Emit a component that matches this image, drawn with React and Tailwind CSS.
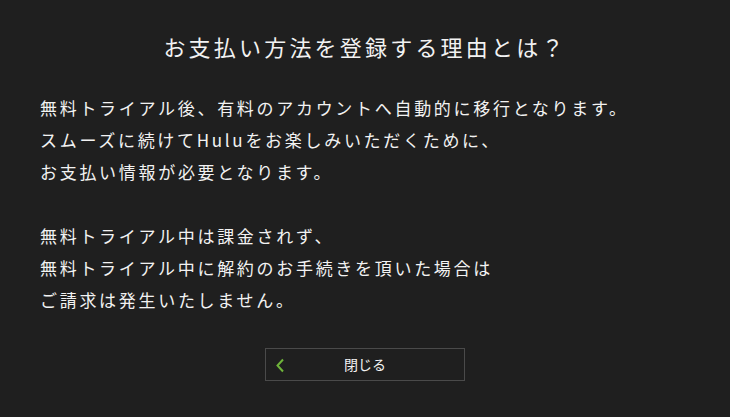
export default function App() {
  return (
    <div
      className="w-[730px] h-[417px] bg-[#1f1f1f] text-[#f2f2f2] overflow-hidden"
      style={{ fontFamily: '"Noto Sans CJK JP", "Noto Sans", sans-serif' }}
    >
      {/* Title */}
      <h1 className="pt-[30px] text-center text-[22px] leading-[32px] tracking-[3.2px] font-normal">
        お支払い方法を登録する理由とは？
      </h1>

      {/* Body */}
      <div className="mt-[30px] px-[40px] text-[17px] leading-[32px] tracking-[2.7px]">
        <p>
          無料トライアル後、有料のアカウントへ自動的に移行となります。
          <br />
          スムーズに続けてHuluをお楽しみいただくために、
          <br />
          お支払い情報が必要となります。
        </p>
        <p className="mt-[32px]">
          無料トライアル中は課金されず、
          <br />
          無料トライアル中に解約のお手続きを頂いた場合は
          <br />
          ご請求は発生いたしません。
        </p>
      </div>

      {/* Close button */}
      <div className="mt-[32px] flex justify-center">
        <button className="relative w-[200px] h-[33px] border border-[#4a4a4a] flex items-center justify-center text-[14px] text-[#f2f2f2]">
          <svg
            className="absolute left-[9px] top-[9px]"
            width="10"
            height="15"
            viewBox="0 0 10 15"
            fill="none"
          >
            <path d="M8 1.5 L2.5 7.5 L8 13.5" stroke="#6fb43a" strokeWidth="2" />
          </svg>
          閉じる
        </button>
      </div>
    </div>
  );
}
